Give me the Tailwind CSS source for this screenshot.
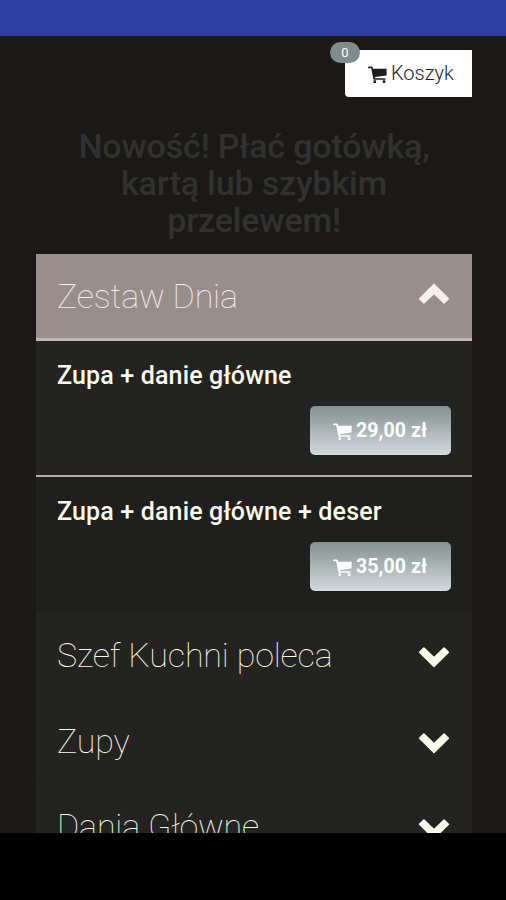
<!DOCTYPE html>
<html lang="pl">
<head>
<meta charset="utf-8">
<title>Menu</title>
<script src="https://cdn.jsdelivr.net/npm/@tailwindcss/browser@4"></script>
</head>
<body class="bg-black font-[Roboto,sans-serif]">
<svg class="hidden">
  <symbol id="cart" viewBox="0 0 19 18"><path fill="currentColor" d="M.7.600h3.200c.4 0 .7.200.8.600L5.200 2.700H18.600V9.600L7 11l.3 1.200h10.200v1.500H6.100c-.4 0-.7-.2-.8-.6L3.200 2.200H.7a.8.8 0 0 1 0-1.600zM5.500 14.300H8V17H5.500zM14.800 14.300h2.500V17h-2.500z"/></symbol>
  <symbol id="down" viewBox="0 0 32 22"><path fill="currentColor" stroke="currentColor" stroke-width="1.600" stroke-linejoin="round" d="M16 20.400 1.600 6.300 5.900 2 16 11.800 26.100 2 30.400 6.300z"/></symbol>
</svg>
<div class="flex h-[900px] w-[506px] flex-col overflow-hidden">
  <div class="h-9 shrink-0 bg-[#303f9f]"></div>
  <main class="h-[797px] shrink-0 overflow-hidden bg-[#1a1917] pl-9 pr-[34px]">
    <div class="mt-[14px] flex justify-end">
      <button class="relative flex h-[47px] w-[127px] items-center rounded-bl-[4px] bg-white pl-[23px] text-[#1f1f1f]">
        <svg class="mt-[3px] h-[18px] w-[19px]"><use href="#cart"/></svg>
        <span class="-mt-px ml-[4px] text-[20px] font-light leading-none">Koszyk</span>
        <span class="absolute -left-[15px] -top-[8px] flex h-[21px] w-[30px] items-center justify-center rounded-full bg-[#7f8c8d] text-[13px] text-white">0</span>
      </button>
    </div>
    <h1 class="mt-[31px] h-[126px] text-center text-[34px] font-medium leading-[37px] tracking-[-0.150px] text-[#313230]">Nowość! Płać gotówką,<br>kartą lub szybkim<br>przelewem!</h1>
    <section class="bg-[#232321]">
      <div class="flex h-[87px] items-center justify-between border-b-3 border-[#bdb5b4] bg-[#9a8e8b] pl-[21px] pr-[22px] text-[#f7efec]">
        <span class="pt-px text-[34px] font-thin tracking-[-0.150px]">Zestaw Dnia</span>
        <svg class="mb-1 h-[22px] w-8 rotate-180"><use href="#down"/></svg>
      </div>
      <div class="flex h-[136px] flex-col border-b-2 border-[#b4adab] px-[21px] pt-[19px] text-[#fbfbeb]">
        <span class="text-[25px] font-medium leading-[32px] tracking-[0.160px]">Zupa + danie główne</span>
        <button class="mt-[14px] flex h-[49px] w-[141px] items-center self-end rounded-[5px] bg-linear-to-b from-[#869090] to-[#d3dade] pl-[23px] text-white">
          <svg class="mt-[3px] h-[18px] w-[19px]"><use href="#cart"/></svg>
          <span class="ml-[4px] text-[19.500px] font-bold tracking-[0.100px]">29,00 zł</span>
        </button>
      </div>
      <div class="flex h-[136px] flex-col bg-[#1f1f1d] px-[21px] pt-[19px] text-[#fbfbeb]">
        <span class="text-[25px] font-medium leading-[32px] tracking-[0.160px]">Zupa + danie główne + deser</span>
        <button class="mt-[14px] flex h-[49px] w-[141px] items-center self-end rounded-[5px] bg-linear-to-b from-[#869090] to-[#d3dade] pl-[23px] text-white">
          <svg class="mt-[3px] h-[18px] w-[19px]"><use href="#cart"/></svg>
          <span class="ml-[4px] text-[19.500px] font-bold tracking-[0.100px]">35,00 zł</span>
        </button>
      </div>
      <div class="flex h-[86px] items-center justify-between pl-[21px] pr-[22px] text-[#fbfbeb]">
        <span class="pb-0.5 text-[34px] font-thin tracking-[-0.150px]">Szef Kuchni poleca</span>
        <svg class="mt-px h-[22px] w-8"><use href="#down"/></svg>
      </div>
      <div class="flex h-[85px] items-center justify-between border-b border-[#20201e] pl-[21px] pr-[22px] text-[#fbfbeb]">
        <span class="text-[34px] font-thin tracking-[-0.150px]">Zupy</span>
        <svg class="mt-[3px] h-[22px] w-8"><use href="#down"/></svg>
      </div>
      <div class="flex h-[86px] items-center justify-between pl-[21px] pr-[22px] text-[#fbfbeb]">
        <span class="pb-0.5 text-[34px] font-thin tracking-[-0.150px]">Dania Główne</span>
        <svg class="mt-[3px] h-[22px] w-8"><use href="#down"/></svg>
      </div>
    </section>
  </main>
</div>
</body>
</html>
